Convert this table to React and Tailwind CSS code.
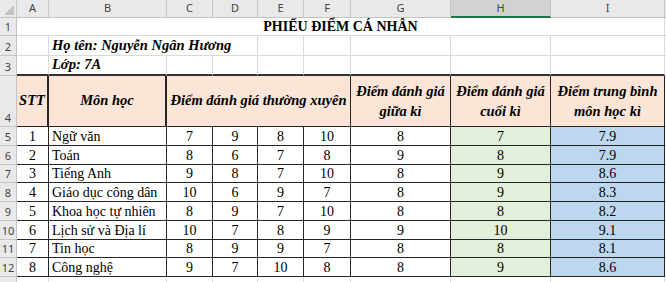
import React from 'react'

const letters = ['A', 'B', 'C', 'D', 'E', 'F', 'G', 'H', 'I']

const subjects = [
  [1, 'Ngữ văn', 7, 9, 8, 10, 8, 7, '7.9'],
  [2, 'Toán', 8, 6, 7, 8, 9, 8, '7.9'],
  [3, 'Tiếng Anh', 9, 8, 7, 10, 8, 9, '8.6'],
  [4, 'Giáo dục công dân', 10, 6, 9, 7, 8, 9, '8.3'],
  [5, 'Khoa học tự nhiên', 8, 9, 7, 10, 8, 8, '8.2'],
  [6, 'Lịch sử và Địa lí', 10, 7, 8, 9, 9, 10, '9.1'],
  [7, 'Tin học', 8, 9, 9, 7, 8, 8, '8.1'],
  [8, 'Công nghệ', 9, 7, 10, 8, 8, 9, '8.6'],
]

const rowHead = 'bg-[#e9e9e9] border-r border-b border-[#c4c4c4] text-[#444] text-[11px] flex items-end justify-center leading-none pb-[3px] font-["Noto_Sans",sans-serif]'
const light = 'border-r border-b border-[#dadada]'
const dark = 'border-r border-b border-[#262626]'
const serif = 'font-["Liberation_Serif","Times_New_Roman",serif] text-black'
const head = `${dark} bg-[#fce4d6] ${serif} font-bold italic text-[14.5px]`

function RowNum({ n }) {
  return <div className={rowHead}>{n}</div>
}

export default function App() {
  return (
    <div className="w-[666px] h-[282px] overflow-hidden bg-white">
      <div className="grid grid-cols-[17px_32px_118px_46px_45px_46px_47px_100px_100px_114px_1px] grid-rows-[18px_18px_20px_20px_51px_19px_19px_18px_19px_19px_19px_18px_19px_19px]">
        {/* column headers */}
        <div className="bg-[#e9e9e9] border-r border-b border-[#c4c4c4] relative">
          <svg className="absolute right-[2px] bottom-[2px]" width="10" height="10" viewBox="0 0 10 10">
            <polygon points="10,0 10,10 0,10" fill="#c2c2c2" />
          </svg>
        </div>
        {letters.map(l => (
          <div
            key={l}
            className={
              l === 'H'
                ? 'bg-[#d2d2d2] border-r border-[#c4c4c4] border-b-2 border-b-[#217346] text-[#1e5e3a] text-[11px] flex items-center justify-center font-["Noto_Sans",sans-serif]'
                : 'bg-[#e9e9e9] border-r border-b border-[#c4c4c4] text-[#444] text-[11px] flex items-center justify-center font-["Noto_Sans",sans-serif]'
            }
          >
            {l}
          </div>
        ))}
        <div className="bg-[#e9e9e9] border-b border-[#c4c4c4]" />

        {/* row 1 */}
        <RowNum n={1} />
        <div className={`col-span-9 ${light} ${serif} font-bold text-[14px] flex items-center justify-center`}>
          PHIẾU ĐIỂM CÁ NHÂN
        </div>
        <div className="border-b border-[#dadada]" />

        {/* row 2 */}
        <RowNum n={2} />
        <div className={light} />
        <div className={`col-span-3 ${light} ${serif} font-bold italic text-[14.5px] flex items-center pl-[3px] whitespace-nowrap`}>
          Họ tên: Nguyễn Ngân Hương
        </div>
        <div className={light} />
        <div className={light} />
        <div className={light} />
        <div className={light} />
        <div className={light} />
        <div className="border-b border-[#dadada]" />

        {/* row 3 */}
        <RowNum n={3} />
        <div className="border-r border-[#dadada] border-b-2 border-b-[#333]" />
        <div className={`border-r border-[#dadada] border-b-2 border-b-[#333] ${serif} font-bold italic text-[14.5px] flex items-center pl-[3px]`}>
          Lớp: 7A
        </div>
        {['C', 'D', 'E', 'F', 'G', 'H', 'I'].map(c => (
          <div key={c} className="border-r border-[#dadada] border-b-2 border-b-[#333]" />
        ))}
        <div className="border-b border-[#dadada]" />

        {/* row 4 */}
        <RowNum n={4} />
        <div className={`${head} border-r-2 flex items-center justify-center`}>STT</div>
        <div className={`${head} border-r-2 flex items-center justify-center`}>Môn học</div>
        <div className={`col-span-4 ${head} flex items-center justify-center whitespace-nowrap`}>
          Điểm đánh giá thường xuyên
        </div>
        <div className={`${head} leading-[20px] flex flex-col items-center justify-center`}>
          <span>Điểm đánh giá</span>
          <span>giữa kì</span>
        </div>
        <div className={`${head} leading-[20px] flex flex-col items-center justify-center`}>
          <span>Điểm đánh giá</span>
          <span>cuối kì</span>
        </div>
        <div className={`${head} leading-[20px] flex flex-col items-center justify-center`}>
          <span>Điểm trung bình</span>
          <span>môn học kì</span>
        </div>
        <div className="border-b border-[#dadada]" />

        {/* data rows */}
        {subjects.map((r, i) => (
          <React.Fragment key={r[0]}>
            <RowNum n={i + 5} />
            <div className={`${dark} ${serif} text-[14px] flex items-center justify-center`}>{r[0]}</div>
            <div className={`${dark} ${serif} text-[14px] flex items-center pl-[3px] whitespace-nowrap`}>{r[1]}</div>
            {r.slice(2, 7).map((v, j) => (
              <div key={j} className={`${dark} ${serif} text-[14px] flex items-center justify-center`}>{v}</div>
            ))}
            <div className={`${dark} bg-[#e2efda] ${serif} text-[14px] flex items-center justify-center`}>{r[7]}</div>
            <div className={`${dark} bg-[#bdd7ee] ${serif} text-[14px] flex items-center justify-center`}>{r[8]}</div>
            <div className="border-b border-[#dadada]" />
          </React.Fragment>
        ))}

        {/* row 13, only its top edge is in view */}
        <div className="bg-[#e9e9e9] border-r border-b border-[#c4c4c4]" />
        {letters.map(l => (
          <div key={l} className={light} />
        ))}
        <div />
      </div>
    </div>
  )
}
